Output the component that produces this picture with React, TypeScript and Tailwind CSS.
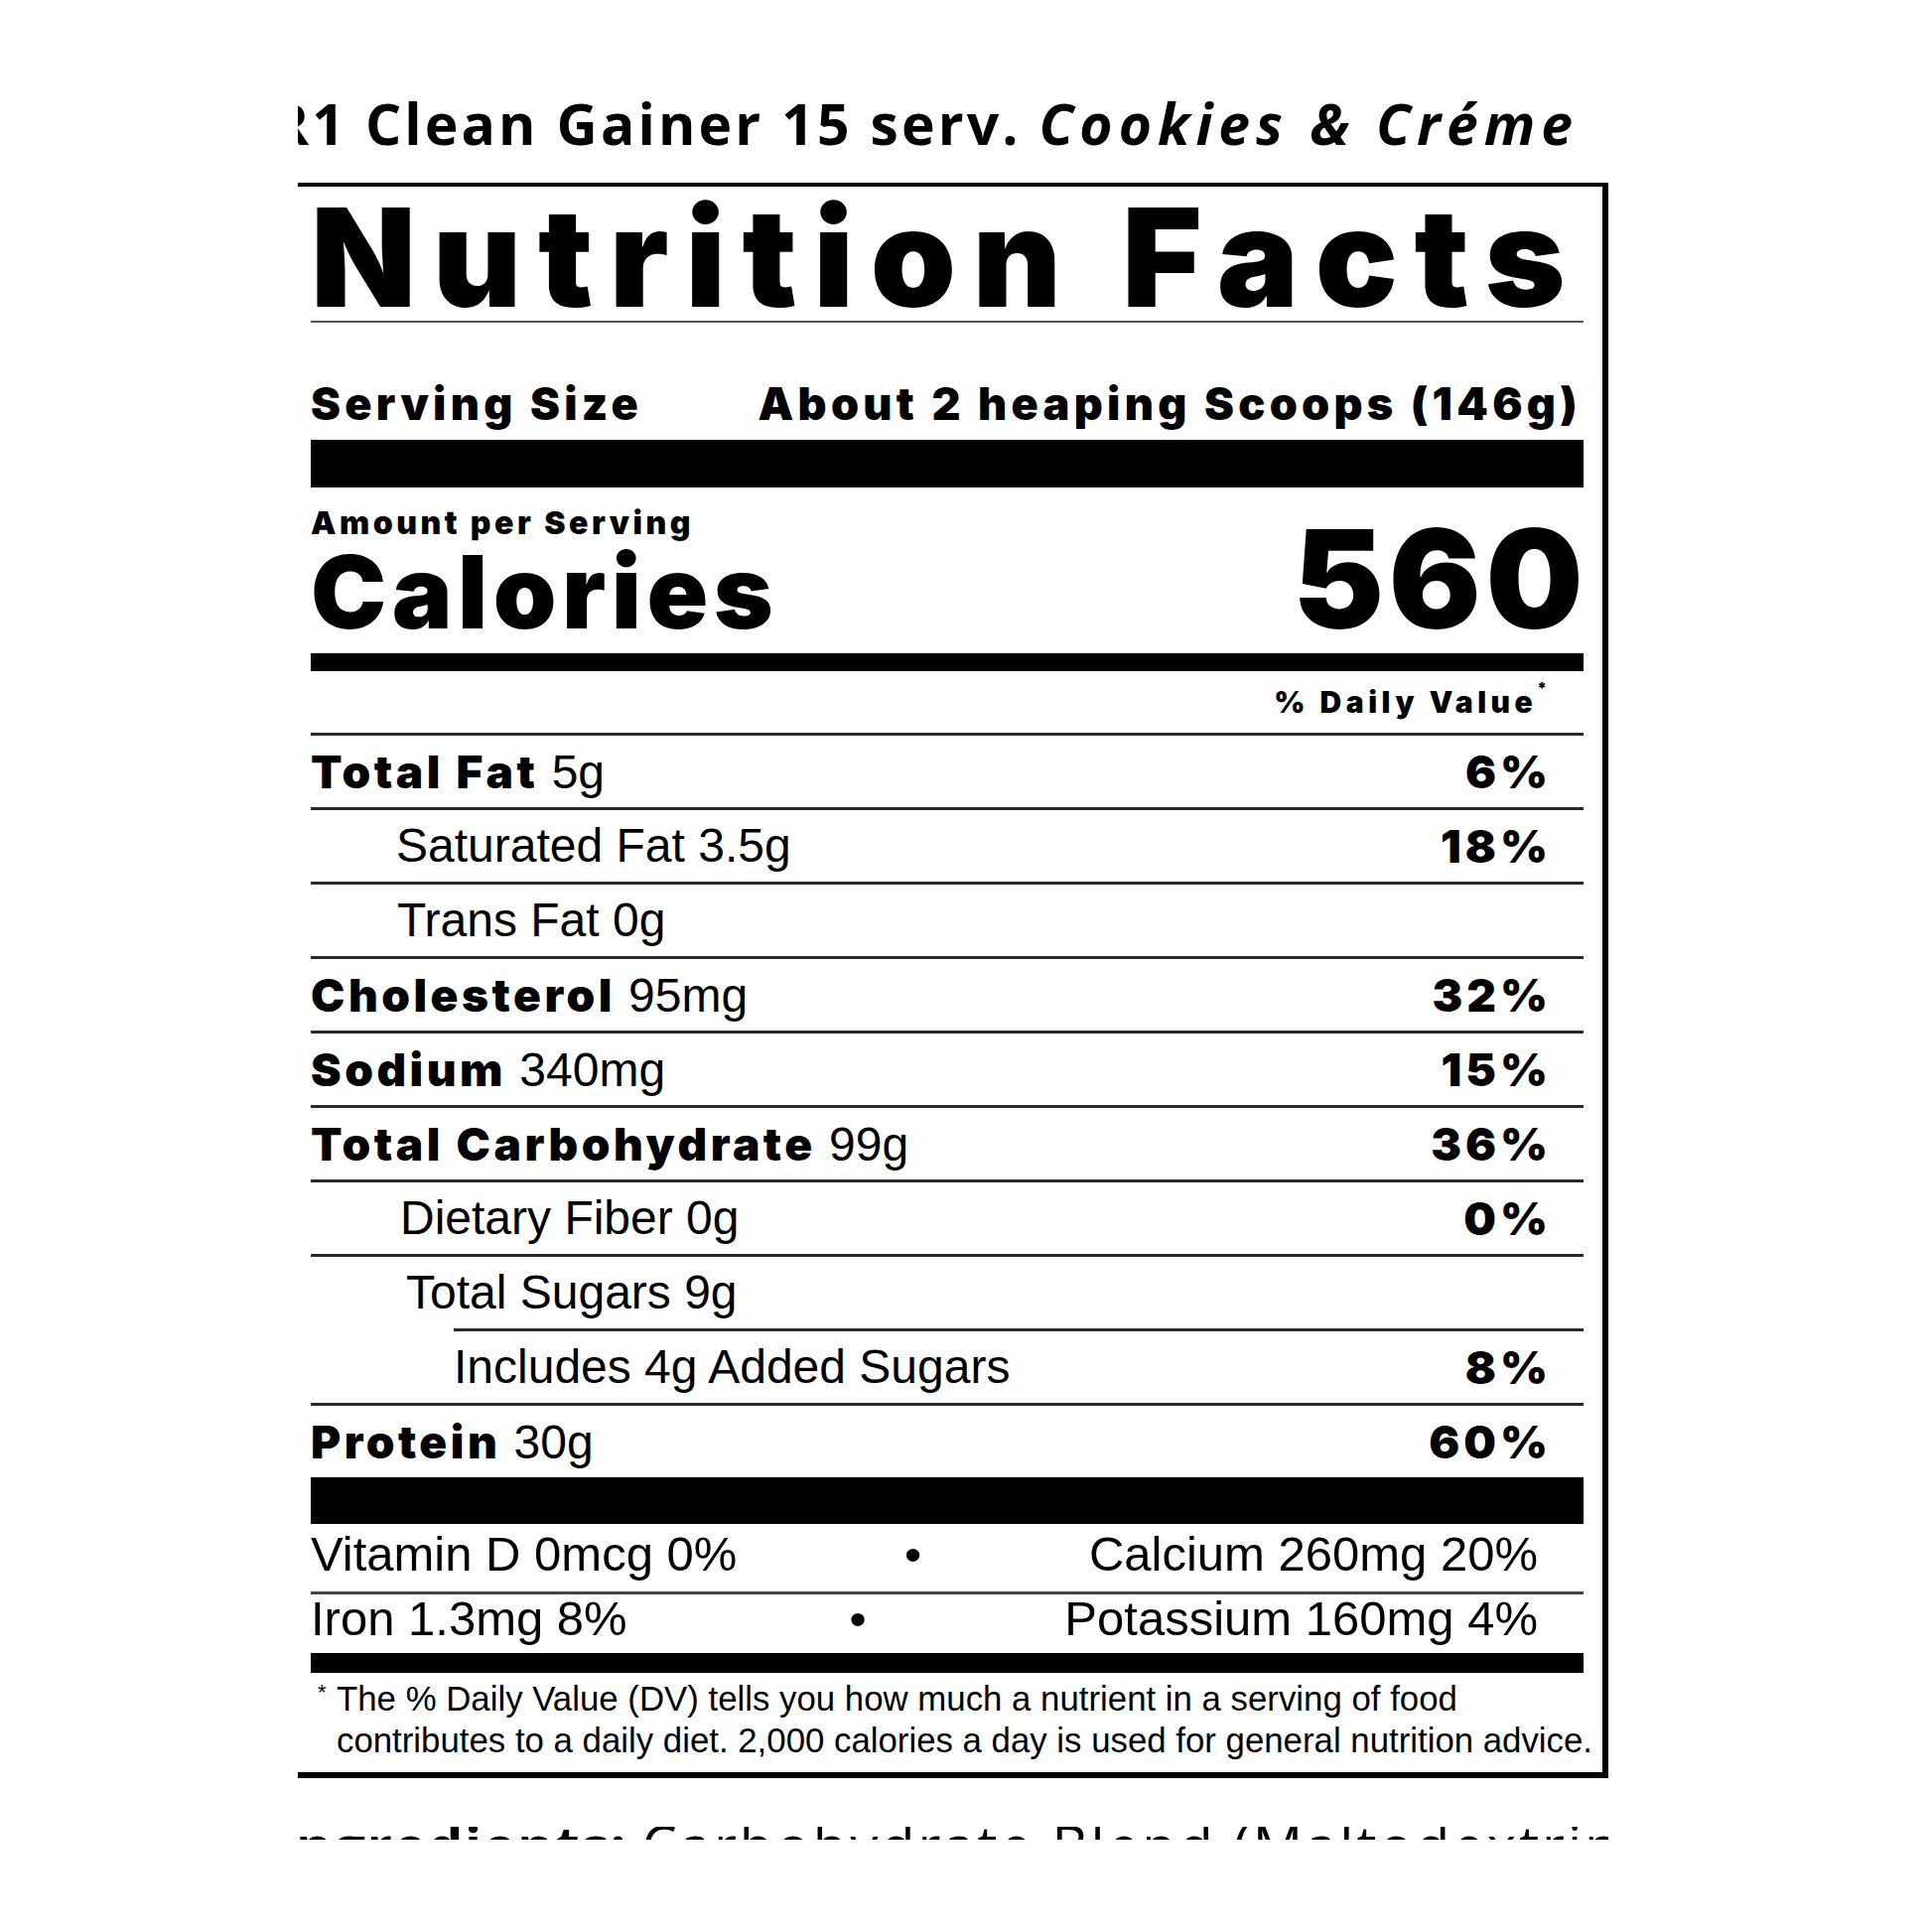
const heavy = "font-['Inter',sans-serif] font-black";

const nutrients = [
  { name: "Total Fat", amount: "5g", dv: "6%", bold: true, indent: "" },
  { name: "Saturated Fat", amount: "3.5g", dv: "18%", bold: false, indent: "pl-[86px]" },
  { name: "Trans Fat", amount: "0g", dv: "", bold: false, indent: "pl-[87px]" },
  { name: "Cholesterol", amount: "95mg", dv: "32%", bold: true, indent: "" },
  { name: "Sodium", amount: "340mg", dv: "15%", bold: true, indent: "" },
  { name: "Total Carbohydrate", amount: "99g", dv: "36%", bold: true, indent: "" },
  { name: "Dietary Fiber", amount: "0g", dv: "0%", bold: false, indent: "pl-[90px]" },
  { name: "Total Sugars", amount: "9g", dv: "", bold: false, indent: "pl-[96px]" },
  { name: "Includes 4g Added Sugars", amount: "", dv: "8%", bold: false, indent: "ml-[144px]" },
  { name: "Protein", amount: "30g", dv: "60%", bold: true, indent: "" },
];

export default function App() {
  return (
    <div className="w-[1946px] h-[1946px] overflow-hidden bg-white text-black font-['Liberation_Sans',Arial,sans-serif]">
      <div className="ml-[300px] w-[1320px]">
        {/* Product title, cut at the left edge */}
        <div className="flex h-[184px] justify-end overflow-hidden pt-[96px] pr-[30px]">
          <div className="whitespace-nowrap font-['Open_Sans',sans-serif] text-[57px] font-bold leading-[56px] tracking-[3.1px]">
            R1 Clean Gainer 15 serv.{" "}
            <span className="italic tracking-[6px]">Cookies &amp; Créme</span>
          </div>
        </div>

        {/* Label box */}
        <div className="border-t-4 border-r-[6px] border-b-[6px] border-black pl-[13px] pr-[19px]">
          <div className={`${heavy} whitespace-nowrap pt-[11px] text-[138px] leading-[120px] tracking-[16.6px]`}>
            Nutrition Facts
          </div>
          <div className="mt-[4px] h-[2px] bg-[#555]" />

          <div className={`${heavy} flex justify-between pt-[57px] pb-[11px] pr-[2px] text-[45px] leading-[50px] tracking-[4.3px]`}>
            <span>Serving Size</span>
            <span>About 2 heaping Scoops (146g)</span>
          </div>
          <div className="h-[48px] bg-black" />

          <div className="flex h-[167px] items-end justify-between">
            <div className="flex flex-col">
              <div className={`${heavy} text-[32px] leading-[30px] tracking-[3.5px]`}>Amount per Serving</div>
              <div className={`${heavy} -mt-[8px] text-[102px] leading-[124px] tracking-[5.5px]`}>Calories</div>
            </div>
            <div className={`${heavy} -mr-[4px] text-[138px] leading-[150px] tracking-[4.5px]`}>560</div>
          </div>
          <div className="h-[18px] bg-black" />

          <div className="flex h-[62px] items-center justify-end pr-[37px]">
            <span className={`${heavy} text-[30px] tracking-[4.5px]`}>
              % Daily Value<span className="align-top text-[16px] leading-none tracking-normal">*</span>
            </span>
          </div>

          {nutrients.map((n) => (
            <div
              key={n.name}
              className={`flex h-[75px] items-center justify-between border-t-[3px] border-[#2a2a2a] pr-[40px] text-[48px] leading-[56px] ${n.indent}`}
            >
              <div className="whitespace-nowrap">
                {n.bold ? (
                  <>
                    <span className={`${heavy} text-[46px] tracking-[3.5px]`}>{n.name}</span> {n.amount}
                  </>
                ) : (
                  <>
                    {n.name}
                    {n.amount ? ` ${n.amount}` : ""}
                  </>
                )}
              </div>
              <div className={`${heavy} -mr-[8px] text-[46px] tracking-[4px]`}>{n.dv}</div>
            </div>
          ))}

          <div className="h-[47px] bg-black" />

          <div className="flex h-[68px] items-center justify-between pb-[8px] pr-[46px] text-[49px] leading-[56px]">
            <span>Vitamin D 0mcg 0%</span>
            <span>•</span>
            <span>Calcium 260mg 20%</span>
          </div>
          <div className="flex h-[62px] items-center justify-between border-t-[3px] border-[#444] pb-[11px] pr-[46px] text-[49px] leading-[56px]">
            <span>Iron 1.3mg 8%</span>
            <span className="ml-[24px]">•</span>
            <span>Potassium 160mg 4%</span>
          </div>
          <div className="h-[20px] bg-black" />

          <div className="whitespace-nowrap pt-[5px] pb-[11px] text-[34.8px] leading-[42px]">
            <div className="pl-[7px]">
              <span className="inline-block w-[19px] align-top text-[22px] leading-[30px]">*</span>
              The % Daily Value (DV) tells you how much a nutrient in a serving of food
            </div>
            <div className="pl-[26px]">
              contributes to a daily diet. 2,000 calories a day is used for general nutrition advice.
            </div>
          </div>
        </div>

        {/* Ingredients line, only its top edge visible */}
        <div className="mt-[49px] h-[13px] overflow-hidden">
          <div className="-ml-[22px] -mt-[10px] whitespace-nowrap font-['Open_Sans',sans-serif] text-[56px] leading-[56px]">
            <span className="font-bold tracking-[1.5px]">Ingredients:</span>{" "}
            <span className="tracking-[3px]">Carbohydrate Blend (Maltodextrin, Dextrose)</span>
          </div>
        </div>
      </div>
    </div>
  );
}
